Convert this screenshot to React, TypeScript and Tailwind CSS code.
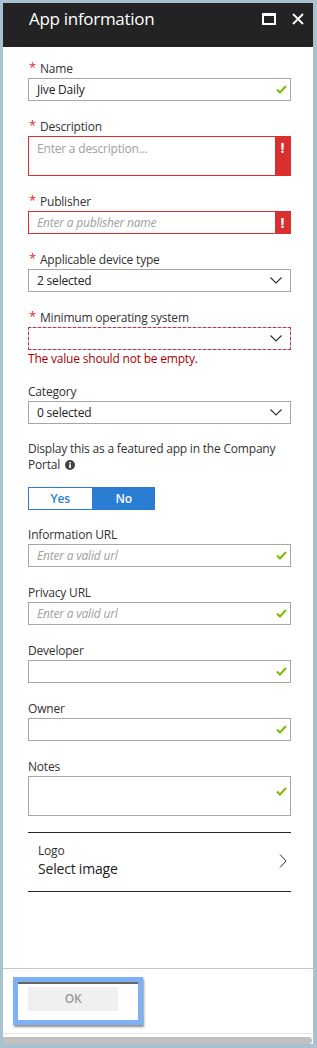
import React from 'react'

const font = { fontFamily: '"Open Sans", "Noto Sans", sans-serif' }

const Check = () => (
  <svg width="11" height="9" viewBox="0 0 11 9" className="shrink-0">
    <path d="M1 4.5 L4 7.5 L10 1" fill="none" stroke="#7fba00" strokeWidth="2" />
  </svg>
)

const Chevron = () => (
  <svg width="12" height="7" viewBox="0 0 12 7" className="shrink-0">
    <path d="M0.5 0.5 L6 6 L11.5 0.5" fill="none" stroke="#333" strokeWidth="1.2" />
  </svg>
)

const InfoIcon = () => (
  <svg width="10" height="10" viewBox="0 0 10 10" className="ml-[5px] inline-block align-[-1px]">
    <circle cx="5" cy="5" r="5" fill="#444" />
    <rect x="4.2" y="4.2" width="1.7" height="3.8" fill="white" />
    <rect x="4.2" y="2" width="1.7" height="1.5" fill="white" />
  </svg>
)

const Label = ({ text, required }: { text: string; required?: boolean }) => (
  <div className="flex h-[18px] items-center text-[12px] text-[#323232]">
    {required && <span className="mr-[4px] -mt-[4px] ml-[1px] text-[13px] leading-none text-[#e8272c]">*</span>}
    <span>{text}</span>
  </div>
)

const TextField = ({
  label,
  required,
  value,
  placeholder,
  italic,
  tall
}: {
  label: string
  required?: boolean
  value?: string
  placeholder?: string
  italic?: boolean
  tall?: boolean
}) => (
  <div className="mb-[17px]">
    <Label text={label} required={required} />
    <div
      className={`flex justify-between border border-[#a6a6a6] pl-[8px] pr-[3px] ${
        tall ? 'h-[40px] items-start pt-[10px]' : 'h-[23px] items-center'
      }`}>
      <span className={`text-[12px] ${value ? 'text-[#222]' : 'text-[#a0a0a0]'} ${italic ? 'italic' : ''}`}>
        {value || placeholder}
      </span>
      <Check />
    </div>
  </div>
)

const ErrorField = ({ label, placeholder, italic, tall }: { label: string; placeholder: string; italic?: boolean; tall?: boolean }) => (
  <div className="mb-[17px]">
    <Label text={label} required />
    <div className={`flex border border-[#d9302f] ${tall ? 'h-[40px]' : 'h-[23px]'}`}>
      <div className={`flex-1 pl-[8px] text-[12px] text-[#a0a0a0] ${italic ? 'italic' : ''} ${tall ? 'pt-[3px]' : 'flex items-center'}`}>
        {placeholder}
      </div>
      <div className={`flex w-[15px] justify-center bg-[#d9302f] text-[14px] font-bold leading-none text-white ${tall ? 'items-start pt-[4px]' : 'items-center'}`}>
        !
      </div>
    </div>
  </div>
)

const SelectField = ({ label, required, value }: { label: string; required?: boolean; value: string }) => (
  <div className="mb-[17px]">
    <Label text={label} required={required} />
    <div className="flex h-[23px] items-center justify-between border border-[#a6a6a6] pl-[8px] pr-[8px]">
      <span className="text-[12px] text-[#222]">{value}</span>
      <Chevron />
    </div>
  </div>
)

export default function App() {
  return (
    <div style={font} className="flex h-[1048px] w-[317px] flex-col bg-[#a9c2d2] pt-[3px] pr-[4px] pb-[4px] pl-[3px] tracking-[-0.2px]">
      <div className="flex flex-1 flex-col bg-white">
        <div className="flex h-[44px] shrink-0 items-center justify-between bg-[#232323] pb-[13px] pl-[26px] pr-[9px]">
          <span className="text-[17px] leading-[24px] tracking-[-0.3px] text-white">App information</span>
          <div className="flex items-center gap-[16px]">
            <svg width="14" height="12" viewBox="0 0 14 12">
              <rect x="1" y="1" width="12" height="10" fill="none" stroke="white" strokeWidth="2" />
              <rect x="0" y="0" width="14" height="3" fill="white" />
            </svg>
            <svg width="12" height="12" viewBox="0 0 12 12">
              <path d="M1 1 L11 11 M11 1 L1 11" stroke="white" strokeWidth="1.8" />
            </svg>
          </div>
        </div>

        <div className="flex-1 pt-[13px] pr-[22px] pl-[25px]">
          <TextField label="Name" required value="Jive Daily" />
          <ErrorField label="Description" placeholder="Enter a description..." tall />
          <ErrorField label="Publisher" placeholder="Enter a publisher name" italic />
          <SelectField label="Applicable device type" required value="2 selected" />

          <div className="mb-[17px]">
            <Label text="Minimum operating system" required />
            <div className="flex h-[23px] items-center justify-end border border-[#8fd0f3] pr-[8px] outline-1 -outline-offset-1 outline-dashed outline-[#e02b2b]">
              <Chevron />
            </div>
            <div className="h-[16px] pt-[1px] text-[12px] leading-[16px] text-[#a80000]">The value should not be empty.</div>
          </div>

          <SelectField label="Category" value="0 selected" />

          <div className="text-[12px] leading-[16px] text-[#323232]">
            <div>Display this as a featured app in the Company</div>
            <div className="flex items-center">
              <span>Portal</span>
              <InfoIcon />
            </div>
          </div>

          <div className="mt-[14px] mb-[16px] flex h-[23px] w-[127px] text-[12px] font-semibold">
            <div className="flex flex-1 items-center justify-center border border-[#2b7cd3] text-[#2b7cd3]">Yes</div>
            <div className="flex flex-1 items-center justify-center bg-[#2b7cd3] text-white">No</div>
          </div>

          <TextField label="Information URL" placeholder="Enter a valid url" italic />
          <TextField label="Privacy URL" placeholder="Enter a valid url" italic />
          <TextField label="Developer" />
          <TextField label="Owner" />
          <div className="-mb-[1px]">
            <TextField label="Notes" tall />
          </div>

          <div className="border-t border-b border-[#262626]">
            <div className="flex items-center justify-between pt-[10px] pr-[4px] pb-[12px] pl-[10px]">
              <div>
                <div className="h-[16px] text-[12px] leading-[16px] text-[#323232]">Logo</div>
                <div className="h-[20px] text-[14px] leading-[20px] text-[#222]">Select image</div>
              </div>
              <svg width="8" height="14" viewBox="0 0 8 14">
                <path d="M1 0.5 L7 7 L1 13.5" fill="none" stroke="#333" strokeWidth="1" />
              </svg>
            </div>
          </div>
        </div>

        <div className="shrink-0 border-t border-[#c6c6c6]">
          <div className="pt-[8px] pb-[8px] pl-[10px]">
            <div className="h-[48px] w-[130px] border-[5px] border-[#7eb0f6] bg-white pt-[5px] pl-[10px] shadow-[1px_2px_2px_rgba(0,0,0,0.45),inset_0_2px_0_#666]">
              <div className="flex h-[24px] w-[90px] items-center justify-center bg-[#f0f0f0] text-[12px] font-semibold text-[#9b9b9b]">
                OK
              </div>
            </div>
          </div>
          <div className="h-[1px] bg-[#e6e6e6]" />
          <div className="h-[3px]" />
          <div className="h-[7px] w-[309px] rounded-r-full bg-[#c1c1c1]" />
        </div>
      </div>
    </div>
  )
}
